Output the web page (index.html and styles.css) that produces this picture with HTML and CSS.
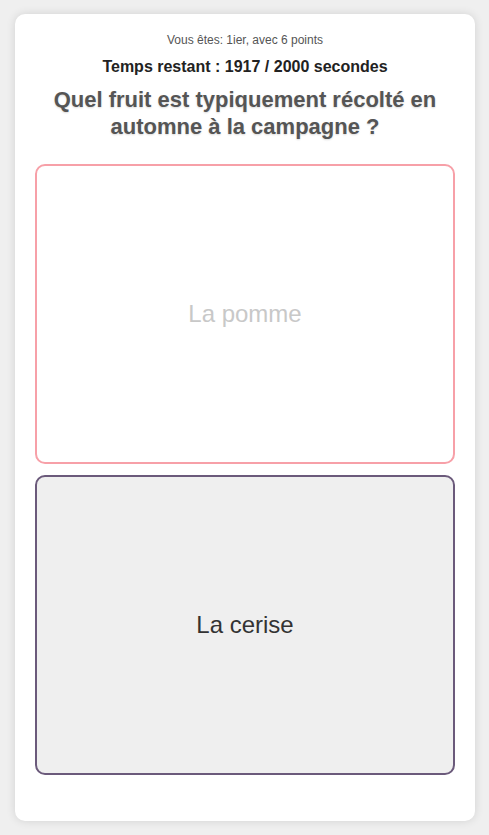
FILE: index.html
```html
<!DOCTYPE html>
<html lang="fr">
<head>
<meta charset="utf-8">
<link rel="stylesheet" href="styles.css">
</head>
<body>
<div class="card">
  <p class="rank">Vous êtes: 1ier, avec 6 points</p>
  <p class="timer">Temps restant : 1917 / 2000 secondes</p>
  <h1 class="question">Quel fruit est typiquement récolté en automne à la campagne ?</h1>
  <div class="options">
    <div class="option option-faded">La pomme</div>
    <div class="option option-active">La cerise</div>
  </div>
</div>
</body>
</html>
```
FILE: styles.css
```css
html, body {
  margin: 0;
  padding: 0;
  background: #efefef;
  font-family: "Liberation Sans", Arial, sans-serif;
}
body {
  padding: 14px 14px 14px 15px;
}
.card {
  width: 460px;
  box-sizing: border-box;
  background: #fff;
  border-radius: 10px;
  box-shadow: 0 0 10px rgba(0, 0, 0, 0.12);
  padding: 19px 20px 46px;
  text-align: center;
}
.rank {
  margin: 0;
  font-size: 12px;
  line-height: 14px;
  color: #555;
}
.timer {
  margin: 11px 0 0;
  font-size: 16px;
  line-height: 18px;
  font-weight: bold;
  color: #222;
}
.question {
  margin: 10px 0 0;
  font-size: 22px;
  line-height: 27px;
  font-weight: bold;
  color: #555;
  text-shadow: 0 1px 2px rgba(0, 0, 0, 0.15);
}
.options {
  margin-top: 24px;
  display: flex;
  flex-direction: column;
  gap: 11px;
}
.option {
  height: 300px;
  box-sizing: border-box;
  border-radius: 10px;
  border: 2px solid;
  display: flex;
  align-items: center;
  justify-content: center;
  font-size: 24px;
}
.option-faded {
  border-color: #f7a0a8;
  background: #fff;
  color: #c8c8c8;
}
.option-active {
  border-color: #6b5a7b;
  background: #efefef;
  color: #333;
}
```
